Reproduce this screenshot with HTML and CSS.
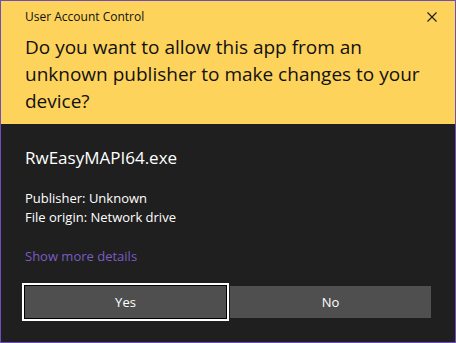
FILE: index.html
```html
<!DOCTYPE html>
<html lang="en">
<head>
<meta charset="UTF-8" />
<title>User Account Control</title>
<link rel="stylesheet" href="styles.css">
</head>
<body>
  <div id="uac">
    <div class="uac-header">
      <div class="title-row">
        <div class="title">User Account Control</div>
        <svg class="close" width="10" height="10" viewBox="0 0 10 10">
          <path d="M0.5 0.5 L9.5 9.5 M9.5 0.5 L0.5 9.5" stroke="#1a1a1a" stroke-width="1.1" fill="none" />
        </svg>
      </div>
      <div class="question">Do you want to allow this app from an unknown publisher to make changes to your device?</div>
    </div>

    <div class="uac-body">
      <div class="app-name">RwEasyMAPI64.exe</div>
      <div class="details">
        <div>Publisher: Unknown</div>
        <div>File origin: Network drive</div>
      </div>
      <div class="more">Show more details</div>
      <div class="buttons">
        <button class="btn focused">Yes</button>
        <button class="btn">No</button>
      </div>
    </div>
  </div>
</body>
</html>
```

FILE: styles.css
```css
body {
  margin: 0;
  background: #1f1f1f;
}
#uac {
  width: 456px;
  height: 343px;
  box-sizing: border-box;
  border: 1px solid #6c4fb8;
  background: #1f1f1f;
  font-family: "Open Sans", "Noto Sans", sans-serif;
  display: flex;
  flex-direction: column;
}

/* Yellow header */
.uac-header {
  background: #fdd35c;
  color: #111;
  padding: 8px 24px 9px;
}
.title-row {
  display: flex;
  justify-content: space-between;
  align-items: flex-start;
}
.title {
  font-size: 12px;
  line-height: 16px;
}
.close {
  margin-top: 3px;
  margin-right: -6px;
}
.question {
  margin-top: 9px;
  font-size: 19px;
  line-height: 27px;
  width: 400px;
}

/* Dark body */
.uac-body {
  flex: 1;
  color: #fff;
  padding: 22px 24px 0;
}
.app-name {
  font-size: 17px;
  line-height: 24px;
}
.details {
  margin-top: 19px;
  font-size: 13px;
  line-height: 19px;
}
.more {
  margin-top: 20px;
  font-size: 13px;
  line-height: 19px;
  color: #7b5cc2;
}
.buttons {
  margin-top: 20px;
  display: flex;
  gap: 4px;
}
.btn {
  width: 201px;
  height: 32px;
  border: none;
  padding: 0;
  background: #4f4f4f;
  color: #fff;
  font-family: inherit;
  font-size: 13px;
}
.btn.focused {
  box-shadow: 0 0 0 1px #000, 0 0 0 3px #fff;
}
```
